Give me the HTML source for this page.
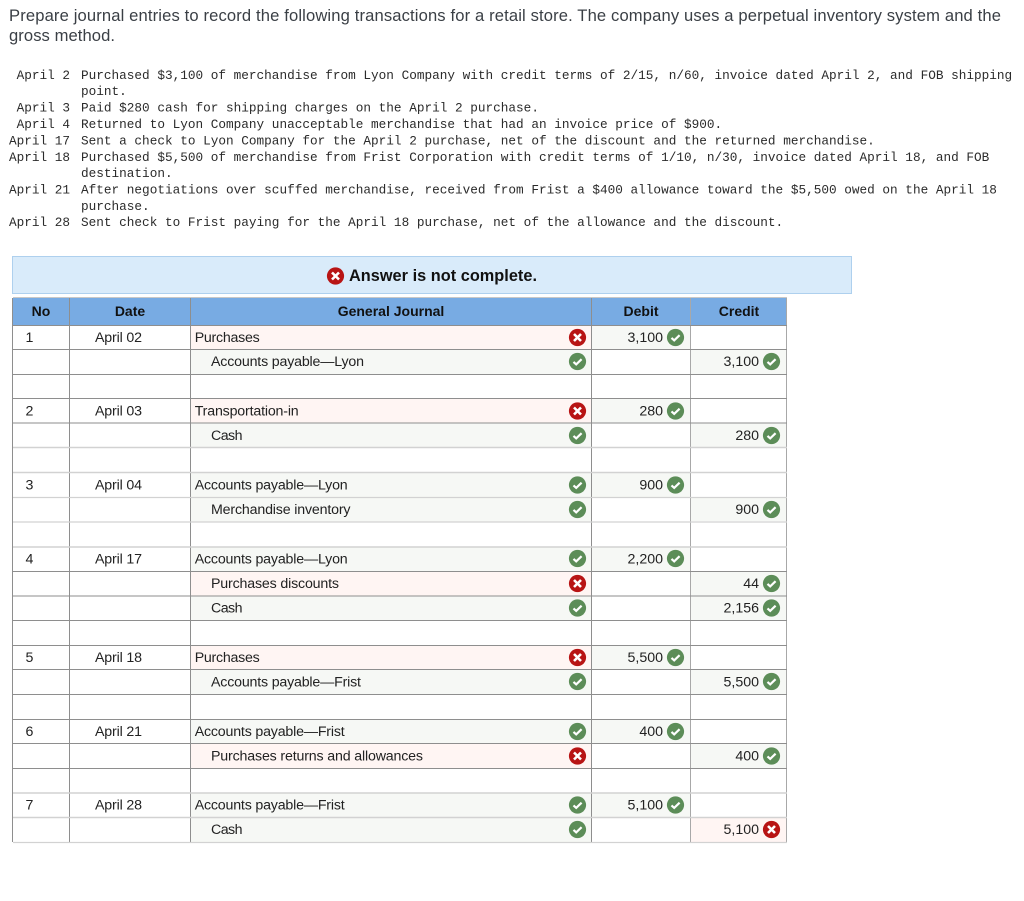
<!DOCTYPE html>
<html lang="en"><head><meta charset="utf-8"><title>Journal entries</title>
<style>
html,body{margin:0;padding:0;background:#fff;width:1024px;height:901px;overflow:hidden}
svg{display:block}
.p{font:16.6px "Liberation Sans",sans-serif;fill:#3a3f45}
.m{font:12.73px "Liberation Mono",monospace;fill:#2b2b2b}
.t{font:14.2px "Liberation Sans",sans-serif;fill:#222}
.h{font:bold 14px "Liberation Sans",sans-serif;fill:#111;text-anchor:middle}
.e{text-anchor:end}
.n{text-anchor:middle}
</style></head><body>
<svg width="1024" height="901" viewBox="0 0 1024 901" xmlns="http://www.w3.org/2000/svg">
<defs>
<g id="c"><circle r="8.6" fill="#5c8d58"/><path d="M-4 .4L-1.3 2.9L4.1-2.3" fill="none" stroke="#fff" stroke-width="2.2"/></g>
<g id="x"><circle r="8.6" fill="#b81414"/><path d="M-3.5-3.5L3.5 3.5M3.5-3.5L-3.5 3.5" fill="none" stroke="#fff" stroke-width="2.6"/></g>
</defs>

<text class="p" x="9" y="21" textLength="992">Prepare journal entries to record the following transactions for a retail store. The company uses a perpetual inventory system and the</text>
<text class="p" x="9" y="41" textLength="106">gross method.</text>

<g transform="translate(0,-0.8)">
<text class="m e" x="70" y="80">April 2</text><text class="m" x="81" y="80">Purchased $3,100 of merchandise from Lyon Company with credit terms of 2/15, n/60, invoice dated April 2, and FOB shipping</text>
<text class="m" x="81" y="96">point.</text>
<text class="m e" x="70" y="112.5">April 3</text><text class="m" x="81" y="112.5">Paid $280 cash for shipping charges on the April 2 purchase.</text>
<text class="m e" x="70" y="129">April 4</text><text class="m" x="81" y="129">Returned to Lyon Company unacceptable merchandise that had an invoice price of $900.</text>
<text class="m e" x="70" y="145.5">April 17</text><text class="m" x="81" y="145.5">Sent a check to Lyon Company for the April 2 purchase, net of the discount and the returned merchandise.</text>
<text class="m e" x="70" y="162">April 18</text><text class="m" x="81" y="162">Purchased $5,500 of merchandise from Frist Corporation with credit terms of 1/10, n/30, invoice dated April 18, and FOB</text>
<text class="m" x="81" y="178">destination.</text>
<text class="m e" x="70" y="194.5">April 21</text><text class="m" x="81" y="194.5">After negotiations over scuffed merchandise, received from Frist a $400 allowance toward the $5,500 owed on the April 18</text>
<text class="m" x="81" y="211">purchase.</text>
<text class="m e" x="70" y="227">April 28</text><text class="m" x="81" y="227">Sent check to Frist paying for the April 18 purchase, net of the allowance and the discount.</text>
</g>

<rect x="12.5" y="256.5" width="839" height="37" fill="#d9ebfa" stroke="#aed0ee"/>
<use href="#x" x="335.5" y="276"/>
<text x="349" y="281" font-family="Liberation Sans" font-weight="bold" font-size="16.3" fill="#111" textLength="188">Answer is not complete.</text>

<rect x="13" y="298" width="773" height="27" fill="#78abe3"/>

<!-- cell tints -->
<g fill="#fff5f3">
<rect x="191" y="325" width="400" height="24"/>
<rect x="191" y="399" width="400" height="24"/>
<rect x="191" y="571" width="400" height="25"/>
<rect x="191" y="645" width="400" height="24"/>
<rect x="191" y="743" width="400" height="25"/>
<rect x="691" y="818" width="95" height="24"/>
</g>
<g fill="#f6f8f5">
<rect x="191" y="349" width="400" height="25"/>
<rect x="191" y="423" width="400" height="24"/>
<rect x="191" y="473" width="400" height="49"/>
<rect x="191" y="547" width="400" height="24"/>
<rect x="191" y="596" width="400" height="24"/>
<rect x="191" y="669" width="400" height="25"/>
<rect x="191" y="719" width="400" height="24"/>
<rect x="191" y="793" width="400" height="49"/>
<rect x="592" y="325" width="98" height="24"/>
<rect x="592" y="399" width="98" height="24"/>
<rect x="592" y="473" width="98" height="24"/>
<rect x="592" y="547" width="98" height="24"/>
<rect x="592" y="645" width="98" height="24"/>
<rect x="592" y="719" width="98" height="24"/>
<rect x="592" y="793" width="98" height="24"/>
<rect x="691" y="349" width="95" height="25"/>
<rect x="691" y="423" width="95" height="24"/>
<rect x="691" y="497" width="95" height="24"/>
<rect x="691" y="571" width="95" height="49"/>
<rect x="691" y="669" width="95" height="25"/>
<rect x="691" y="743" width="95" height="25"/>
</g>

<!-- grid -->
<g stroke="#8e8e8e" stroke-width="1" fill="none">
<path d="M12.5 298V842M69.5 298V842M190.5 298V842M591.5 298V842"/>
<path stroke="#a8a8a8" d="M690.5 298V842M786.5 298V842"/>
<path d="M13 325.5H787M13 349.5H787M13 374.5H787M13 398.5H787M13 423H787M13 571.5H787M13 596H787M13 620.5H787M13 645.5H787M13 669.5H787M13 694.5H787M13 719.5H787M13 743.5H787M13 768.5H787"/>
<path stroke="#c8c8c8" d="M13 297.5H787"/>
</g>
<g stroke="#d2d2d2" fill="none">
<path stroke-width="1.6" d="M13 447.5H787M13 472.5H787M13 793H787M13 817.5H787"/>
<path stroke-width="1.2" d="M13 497.5H787M13 522H787M13 842.5H787"/>
<path stroke-width="1.6" d="M13 547H787"/>
</g>

<!-- header -->
<text class="h" x="41" y="316">No</text>
<text class="h" x="130" y="316">Date</text>
<text class="h" x="391" y="316">General Journal</text>
<text class="h" x="641" y="316">Debit</text>
<text class="h" x="739" y="316">Credit</text>

<!-- numbers and dates -->
<g class="t">
<text class="t n" x="29.5" y="342">1</text><text class="t" x="95" y="342" textLength="47">April 02</text>
<text class="t n" x="29.5" y="415.5">2</text><text class="t" x="95" y="415.5" textLength="47">April 03</text>
<text class="t n" x="29.5" y="489.5">3</text><text class="t" x="95" y="489.5" textLength="47">April 04</text>
<text class="t n" x="29.5" y="563.5">4</text><text class="t" x="95" y="563.5" textLength="47">April 17</text>
<text class="t n" x="29.5" y="662">5</text><text class="t" x="95" y="662" textLength="47">April 18</text>
<text class="t n" x="29.5" y="736">6</text><text class="t" x="95" y="736" textLength="47">April 21</text>
<text class="t n" x="29.5" y="809.5">7</text><text class="t" x="95" y="809.5" textLength="47">April 28</text>
</g>

<!-- accounts -->
<text class="t" x="194.7" y="342" textLength="65">Purchases</text>
<text class="t" x="211" y="366" textLength="153">Accounts payable—Lyon</text>
<text class="t" x="194.7" y="415.5" textLength="104">Transportation-in</text>
<text class="t" x="211" y="440" textLength="31.5">Cash</text>
<text class="t" x="194.7" y="489.5" textLength="153">Accounts payable—Lyon</text>
<text class="t" x="211" y="514" textLength="139.5">Merchandise inventory</text>
<text class="t" x="194.7" y="563.5" textLength="153">Accounts payable—Lyon</text>
<text class="t" x="211" y="588" textLength="128">Purchases discounts</text>
<text class="t" x="211" y="612.5" textLength="31.5">Cash</text>
<text class="t" x="194.7" y="662" textLength="65">Purchases</text>
<text class="t" x="211" y="686.5" textLength="150">Accounts payable—Frist</text>
<text class="t" x="194.7" y="736" textLength="150">Accounts payable—Frist</text>
<text class="t" x="211" y="760.5" textLength="212">Purchases returns and allowances</text>
<text class="t" x="194.7" y="809.5" textLength="150">Accounts payable—Frist</text>
<text class="t" x="211" y="834" textLength="31.5">Cash</text>

<!-- amounts -->
<text class="t e" x="663" y="342">3,100</text>
<text class="t e" x="759" y="366">3,100</text>
<text class="t e" x="663" y="415.5">280</text>
<text class="t e" x="759" y="440">280</text>
<text class="t e" x="663" y="489.5">900</text>
<text class="t e" x="759" y="514">900</text>
<text class="t e" x="663" y="563.5">2,200</text>
<text class="t e" x="759" y="588">44</text>
<text class="t e" x="759" y="612.5">2,156</text>
<text class="t e" x="663" y="662">5,500</text>
<text class="t e" x="759" y="686.5">5,500</text>
<text class="t e" x="663" y="736">400</text>
<text class="t e" x="759" y="760.5">400</text>
<text class="t e" x="663" y="809.5">5,100</text>
<text class="t e" x="759" y="834">5,100</text>

<!-- journal column icons -->
<use href="#x" x="577.5" y="337.5"/>
<use href="#c" x="577.5" y="361.5"/>
<use href="#x" x="577.5" y="411"/>
<use href="#c" x="577.5" y="435.5"/>
<use href="#c" x="577.5" y="485"/>
<use href="#c" x="577.5" y="509.5"/>
<use href="#c" x="577.5" y="558.5"/>
<use href="#x" x="577.5" y="583.5"/>
<use href="#c" x="577.5" y="608"/>
<use href="#x" x="577.5" y="657.5"/>
<use href="#c" x="577.5" y="681.5"/>
<use href="#c" x="577.5" y="731.5"/>
<use href="#x" x="577.5" y="756"/>
<use href="#c" x="577.5" y="805"/>
<use href="#c" x="577.5" y="829.5"/>

<!-- debit icons -->
<use href="#c" x="675.5" y="337.5"/>
<use href="#c" x="675.5" y="411"/>
<use href="#c" x="675.5" y="485"/>
<use href="#c" x="675.5" y="558.5"/>
<use href="#c" x="675.5" y="657.5"/>
<use href="#c" x="675.5" y="731.5"/>
<use href="#c" x="675.5" y="805"/>

<!-- credit icons -->
<use href="#c" x="771.5" y="361.5"/>
<use href="#c" x="771.5" y="435.5"/>
<use href="#c" x="771.5" y="509.5"/>
<use href="#c" x="771.5" y="583.5"/>
<use href="#c" x="771.5" y="608"/>
<use href="#c" x="771.5" y="681.5"/>
<use href="#c" x="771.5" y="756"/>
<use href="#x" x="771.5" y="829.5"/>
</svg>
</body></html>
